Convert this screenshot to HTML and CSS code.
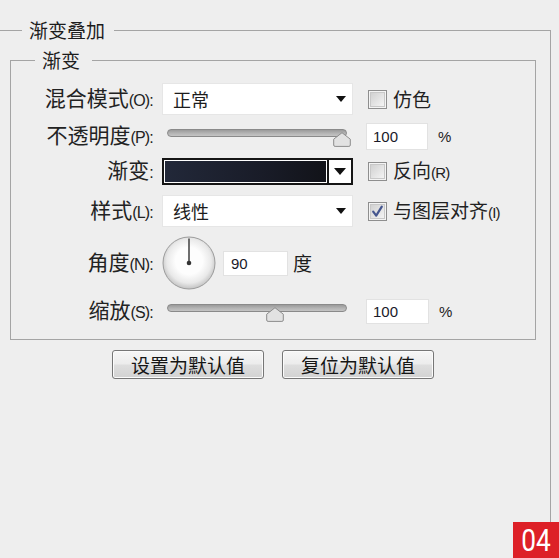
FILE: index.html
```html
<!DOCTYPE html>
<html lang="zh-CN">
<head>
<meta charset="utf-8">
<title>渐变叠加</title>
<link rel="stylesheet" href="styles.css">
</head>
<body>
<fieldset class="panel">
  <legend class="panel-title">渐变叠加</legend>
  <fieldset class="group">
    <legend class="group-title">渐变</legend>
    <div class="form">
      <label class="lbl">混合模式<span class="key">(O):</span></label>
      <div class="select"><span class="select-value">正常</span><span class="caret"></span></div>
      <div class="check">
        <svg class="box" width="19" height="19" viewBox="0 0 19 19"><rect x="0.5" y="0.5" width="18" height="18" fill="#f4f4f4" stroke="#8e8e8e"/><rect x="2.5" y="2.5" width="14" height="14" fill="url(#cbg)" stroke="#c8c8c8"/><defs><linearGradient id="cbg" x1="0" y1="0" x2="1" y2="1"><stop offset="0" stop-color="#d0d0d0"/><stop offset="1" stop-color="#f5f5f5"/></linearGradient></defs></svg>
        <span class="check-text">仿色</span>
      </div>

      <label class="lbl">不透明度<span class="key">(P):</span></label>
      <div class="slider">
        <div class="track"></div>
        <svg class="thumb" style="left: 97%" width="18" height="15" viewBox="0 0 18 15"><path d="M9 0.7 L17.3 7.2 V13 Q17.3 14.4 15.9 14.4 H2.1 Q0.7 14.4 0.7 13 V7.2 Z" fill="#e2e2e2" stroke="#8c8c8c"/></svg>
      </div>
      <div class="num"><span class="field">100</span><span class="unit">%</span></div>

      <label class="lbl">渐变<span class="key">:</span></label>
      <div class="gradient"><span class="swatch"></span><span class="grad-btn"><span class="caret big"></span></span></div>
      <div class="check">
        <svg class="box" width="19" height="19" viewBox="0 0 19 19"><rect x="0.5" y="0.5" width="18" height="18" fill="#f4f4f4" stroke="#8e8e8e"/><rect x="2.5" y="2.5" width="14" height="14" fill="url(#cbg)" stroke="#c8c8c8"/></svg>
        <span class="check-text">反向<span class="key">(R)</span></span>
      </div>

      <label class="lbl">样式<span class="key">(L):</span></label>
      <div class="select"><span class="select-value">线性</span><span class="caret"></span></div>
      <div class="check">
        <svg class="box" width="19" height="19" viewBox="0 0 19 19"><rect x="0.5" y="0.5" width="18" height="18" fill="#f4f4f4" stroke="#8e8e8e"/><rect x="2.5" y="2.5" width="14" height="14" fill="url(#cbg)" stroke="#c8c8c8"/><path d="M5.2 9.6 L8.2 13.6 L13.8 4.6" fill="none" stroke="#45568f" stroke-width="2.2" stroke-linecap="round" stroke-linejoin="round"/></svg>
        <span class="check-text">与图层对齐<span class="key">(I)</span></span>
      </div>

      <label class="lbl">角度<span class="key">(N):</span></label>
      <div class="angle">
        <svg class="dial" width="54" height="54" viewBox="0 0 54 54"><defs><radialGradient id="dg" cx="50%" cy="46%" r="52%"><stop offset="0.5" stop-color="#fdfdfd"/><stop offset="0.82" stop-color="#e9e9e9"/><stop offset="1" stop-color="#c9c9c9"/></radialGradient></defs><circle cx="27" cy="27" r="26" fill="url(#dg)" stroke="#9c9c9c"/><line x1="27" y1="27" x2="27" y2="2.5" stroke="#4a4a4a" stroke-width="1.6"/><circle cx="27" cy="27" r="2.3" fill="#333"/></svg>
        <span class="field short">90</span>
        <span class="unit-cjk">度</span>
      </div>

      <label class="lbl">缩放<span class="key">(S):</span></label>
      <div class="slider">
        <div class="track"></div>
        <svg class="thumb" style="left: 60%" width="18" height="15" viewBox="0 0 18 15"><path d="M9 0.7 L17.3 7.2 V13 Q17.3 14.4 15.9 14.4 H2.1 Q0.7 14.4 0.7 13 V7.2 Z" fill="#e2e2e2" stroke="#8c8c8c"/></svg>
      </div>
      <div class="num"><span class="field low">100</span><span class="unit">%</span></div>
    </div>
  </fieldset>
  <div class="buttons">
    <button class="btn" type="button">设置为默认值</button>
    <button class="btn" type="button">复位为默认值</button>
  </div>
</fieldset>
<div class="badge"><span class="badge-num">04</span></div>
</body>
</html>
```

FILE: styles.css
```css
* { box-sizing: border-box; }
html, body { margin: 0; height: 100%; overflow: hidden; }
body {
  background: #eeeeee;
  font-family: "Noto Sans CJK SC", "Liberation Sans", sans-serif;
  color: #1c1c1c;
  position: relative;
}

.panel {
  margin: 19px 8px 0 -2px;
  padding: 8px 14px 0 11px;
  border: 1px solid #a4a4a4;
  border-bottom: 0;
  height: 539px;
  min-inline-size: 0;
}
.panel-title {
  margin-left: 12px;
  padding: 0 9px 0 7px;
  font-size: 19px;
  line-height: 22px;
}
.group {
  margin: 0;
  padding: 10px 0 8px 0;
  border: 1px solid #a4a4a4;
  min-inline-size: 0;
}
.group-title {
  margin-left: 24px;
  padding: 0 12px 0 7px;
  font-size: 19px;
  line-height: 22px;
}

.form {
  display: grid;
  grid-template-columns: 151px 204px 1fr;
  grid-template-rows: 36px 38px 32px 48px 56px 40px;
  align-items: center;
}
.lbl {
  text-align: right;
  padding-right: 9px;
  font-size: 21px;
  line-height: 24px;
  white-space: nowrap;
  color: #222;
}
.key {
  font-family: "Liberation Sans", sans-serif;
  font-size: 16px;
  letter-spacing: -0.8px;
}

.select {
  width: 191px;
  height: 32px;
  background: #fff;
  border: 1px solid #e6e6e6;
  display: flex;
  align-items: center;
  justify-content: space-between;
  padding: 0 6px 0 10px;
}
.select-value { font-size: 18px; line-height: 22px; }
.caret {
  width: 0;
  height: 0;
  border-left: 5px solid transparent;
  border-right: 5px solid transparent;
  border-top: 6px solid #111;
}
.caret.big {
  border-left-width: 6px;
  border-right-width: 6px;
  border-top-width: 7px;
}

.check {
  display: flex;
  align-items: center;
  gap: 6px;
  margin-left: 2px;
  font-size: 19px;
  line-height: 22px;
  white-space: nowrap;
  color: #222;
}
.check .key { font-size: 15px; }
.box { flex: none; display: block; }

.slider {
  position: relative;
  width: 180px;
  height: 20px;
  margin-left: 5px;
}
.track {
  margin-top: 3px;
  height: 8px;
  border: 1px solid #8a8a8a;
  border-radius: 4px;
  background: linear-gradient(#9a9a9a, #b4b4b4 55%, #c4c4c4);
}
.thumb {
  position: absolute;
  top: 6px;
  transform: translateX(-50%);
  display: block;
}

.num {
  display: flex;
  align-items: center;
  gap: 10px;
}
.field {
  display: block;
  background: #fff;
  border: 1px solid #e2e2e2;
  width: 62px;
  height: 27px;
  padding-left: 6px;
  font-family: "Liberation Sans", sans-serif;
  font-size: 15px;
  line-height: 25px;
  color: #1a1a2a;
}
.field.low { height: 25px; line-height: 23px; width: 63px; }
.field.short { width: 65px; height: 25px; line-height: 23px; padding-left: 7px; }
.unit {
  font-family: "Liberation Sans", sans-serif;
  font-size: 15px;
}

.gradient {
  width: 191px;
  height: 27px;
  border: 2px solid #151515;
  background: #fff;
  display: flex;
}
.swatch {
  flex: 1;
  margin: 1px;
  background: linear-gradient(90deg, #222839, #191c28 60%, #121319);
}
.grad-btn {
  width: 24px;
  border-left: 2px solid #151515;
  display: flex;
  align-items: center;
  justify-content: center;
}

.angle {
  grid-column: 2 / 4;
  display: flex;
  align-items: center;
}
.dial { display: block; margin-right: 7px; }
.unit-cjk { margin-left: 5px; font-size: 19px; line-height: 22px; }

.buttons {
  display: flex;
  justify-content: center;
  gap: 18px;
  margin-top: 10px;
}
.btn {
  width: 152px;
  height: 29px;
  padding: 0;
  border: 1px solid #767676;
  border-radius: 3px;
  background: linear-gradient(#f6f6f6, #ececec 48%, #dedede 52%, #d2d2d2);
  box-shadow: inset 0 0 0 1px #fbfbfb;
  font-family: "Noto Sans CJK SC", sans-serif;
  font-size: 19px;
  line-height: 27px;
  color: #151515;
}

.badge {
  position: absolute;
  right: 0;
  bottom: 0;
  width: 46px;
  height: 36px;
  background: #dd2027;
  color: #fff;
  display: flex;
  align-items: center;
  justify-content: center;
}
.badge-num {
  display: inline-block;
  font-family: Roboto, "Liberation Sans", sans-serif;
  font-size: 32px;
  line-height: 36px;
  transform: scaleX(0.82);
}
```
